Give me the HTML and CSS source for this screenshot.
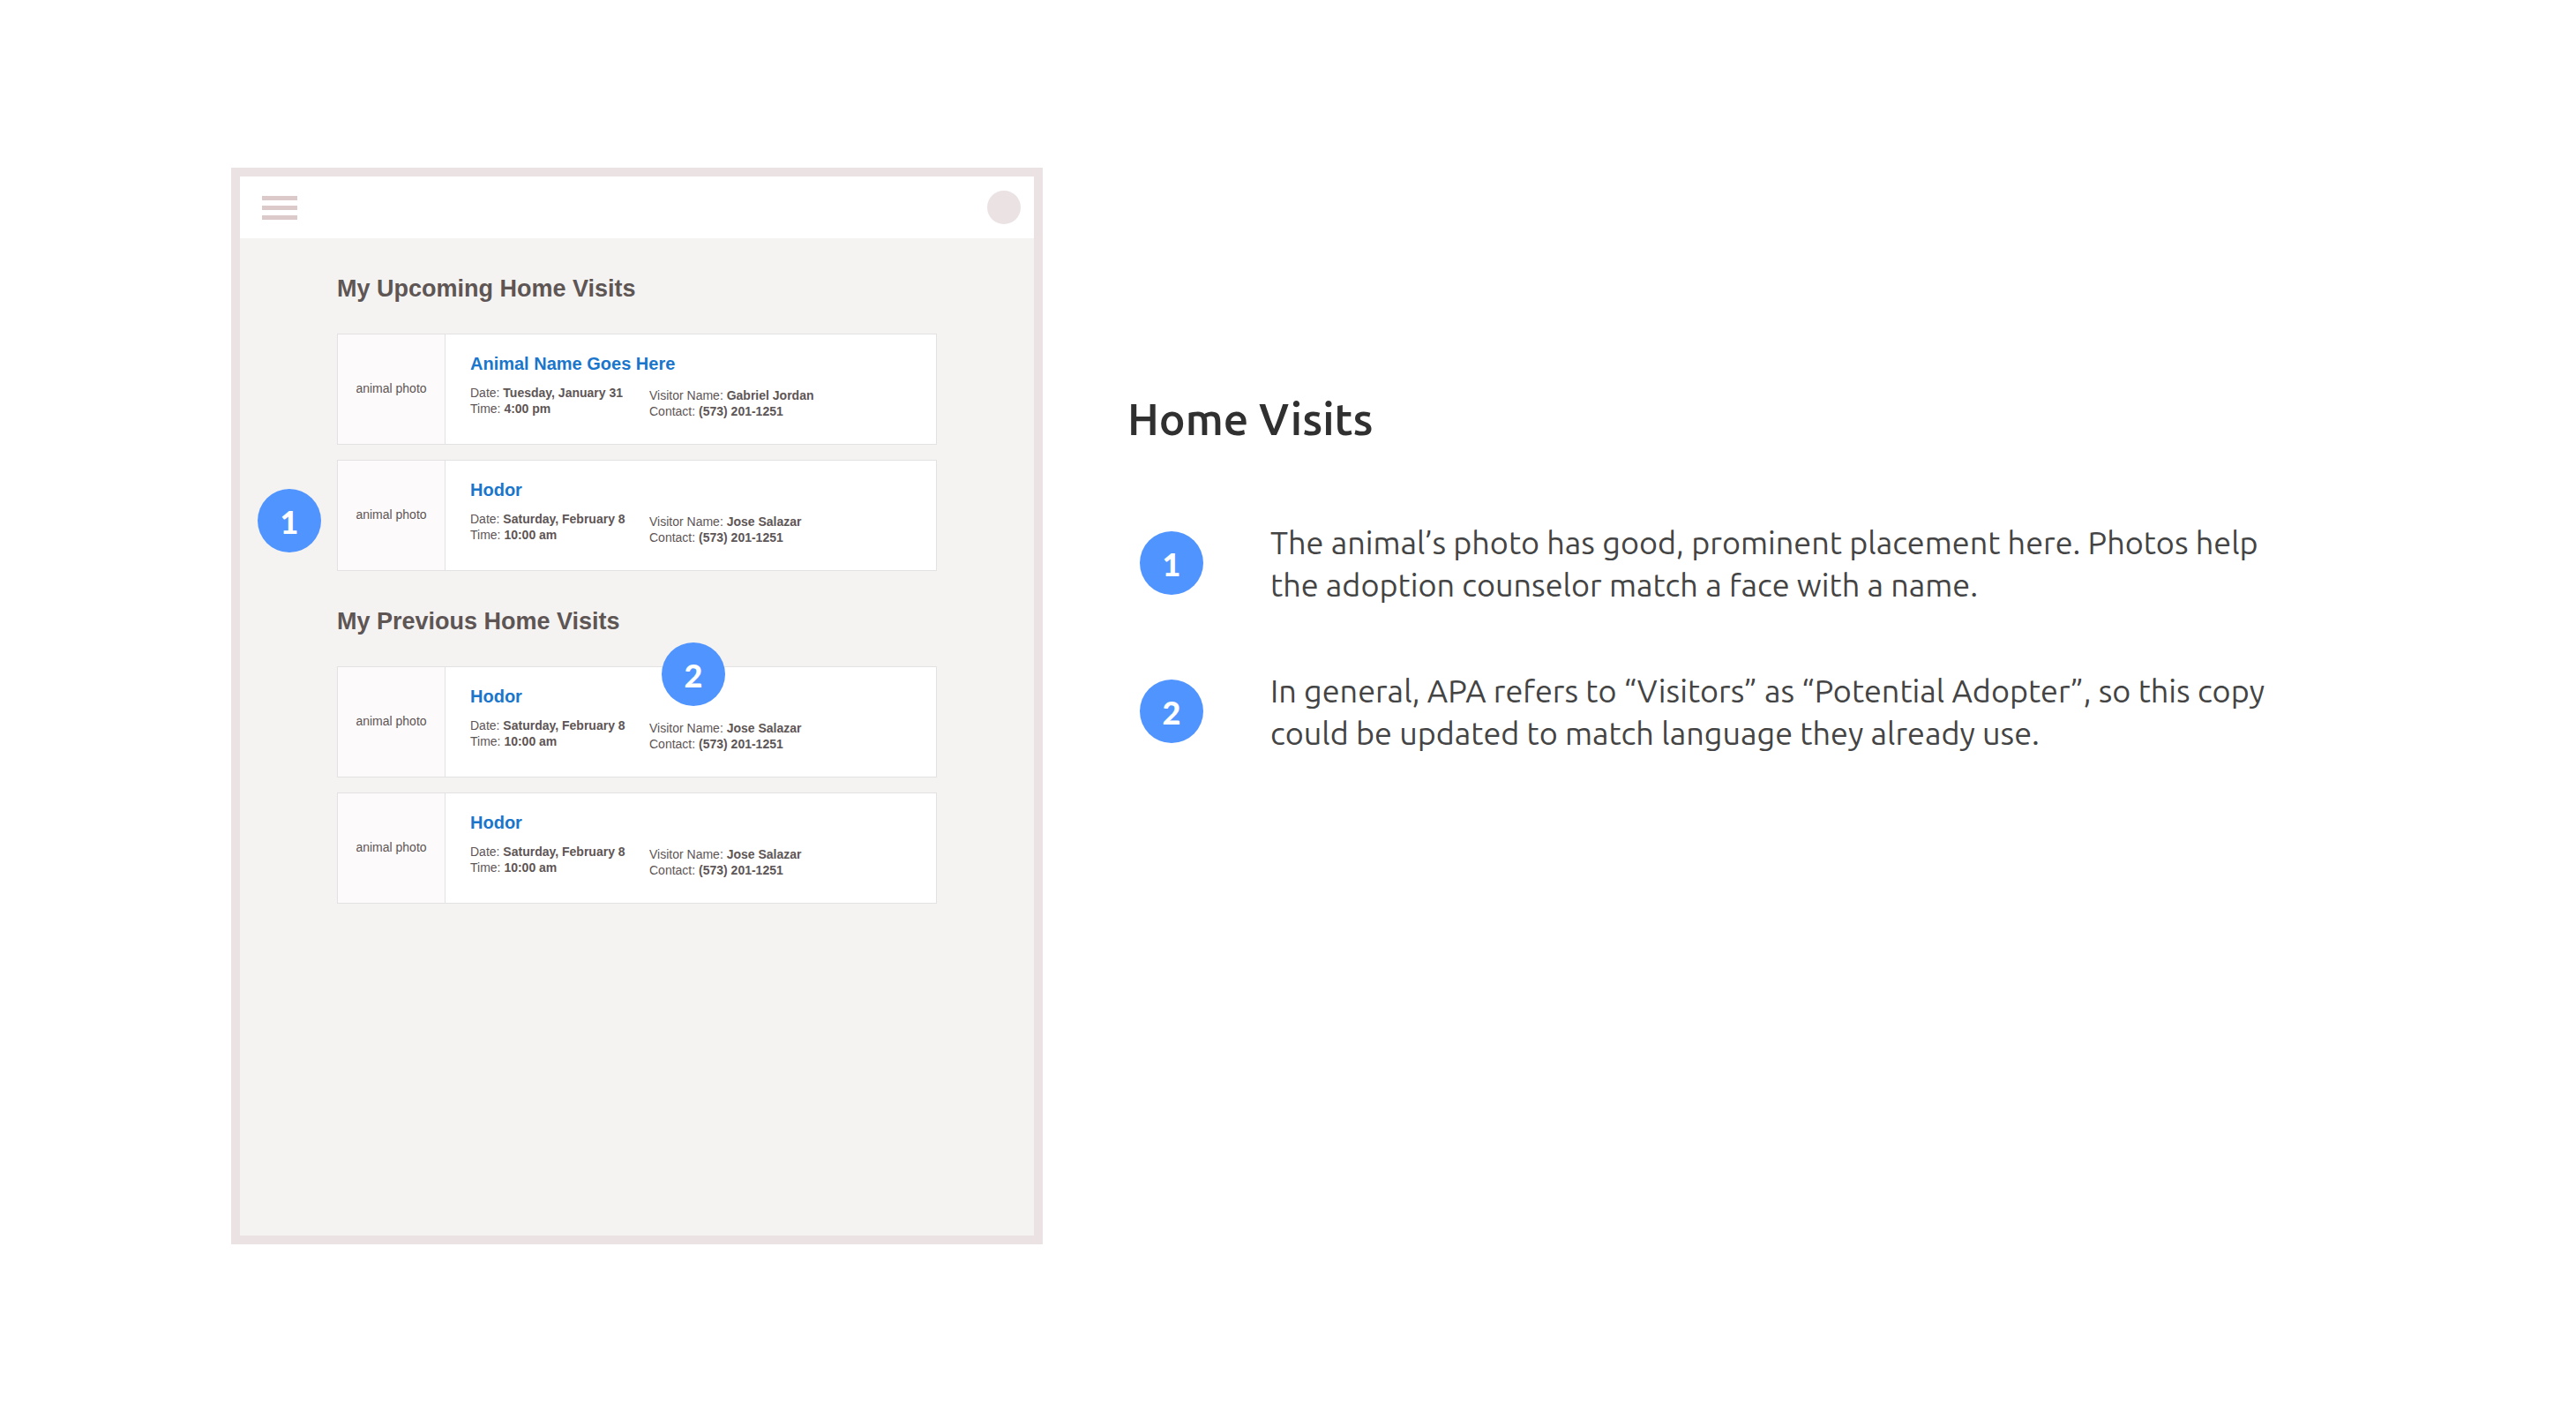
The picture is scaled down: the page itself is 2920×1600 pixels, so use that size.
FILE: index.html
```html
<!DOCTYPE html>
<html lang="en">
<head>
<meta charset="utf-8">
<meta name="viewport" content="width=device-width, initial-scale=1">
<title>Home Visits</title>
<link rel="stylesheet" href="styles.css">
</head>
<body>
<div class="page">
  <section class="wireframe" aria-label="Home visits screen">
    <header class="topbar">
      <button class="menu" type="button" aria-label="Menu"><span class="bar"></span><span class="bar"></span><span class="bar"></span></button>
      <span class="avatar"></span>
    </header>
    <div class="screen">
      <section class="group">
        <h2 class="group-title">My Upcoming Home Visits</h2>
        <div class="cards">
          <article class="card">
            <div class="photo">animal photo</div>
            <div class="details">
              <h3 class="name"><a href="#">Animal Name Goes Here</a></h3>
              <p class="when">Date: <strong>Tuesday, January 31</strong><br>Time: <strong>4:00 pm</strong></p>
              <p class="who">Visitor Name: <strong>Gabriel Jordan</strong><br>Contact: <strong>(573) 201-1251</strong></p>
            </div>
          </article>
          <article class="card">
            <div class="photo">animal photo</div>
            <div class="details">
              <h3 class="name"><a href="#">Hodor</a></h3>
              <p class="when">Date: <strong>Saturday, February 8</strong><br>Time: <strong>10:00 am</strong></p>
              <p class="who">Visitor Name: <strong>Jose Salazar</strong><br>Contact: <strong>(573) 201-1251</strong></p>
            </div>
            <span class="marker pin-side">1</span>
          </article>
        </div>
      </section>
      <section class="group">
        <h2 class="group-title">My Previous Home Visits</h2>
        <div class="cards">
          <article class="card">
            <div class="photo">animal photo</div>
            <div class="details">
              <h3 class="name"><a href="#">Hodor</a></h3>
              <p class="when">Date: <strong>Saturday, February 8</strong><br>Time: <strong>10:00 am</strong></p>
              <p class="who">Visitor Name: <strong>Jose Salazar</strong><br>Contact: <strong>(573) 201-1251</strong></p>
            </div>
            <span class="marker pin-top">2</span>
          </article>
          <article class="card">
            <div class="photo">animal photo</div>
            <div class="details">
              <h3 class="name"><a href="#">Hodor</a></h3>
              <p class="when">Date: <strong>Saturday, February 8</strong><br>Time: <strong>10:00 am</strong></p>
              <p class="who">Visitor Name: <strong>Jose Salazar</strong><br>Contact: <strong>(573) 201-1251</strong></p>
            </div>
          </article>
        </div>
      </section>
    </div>
  </section>
  <section class="notes">
    <h1 class="notes-title">Home Visits</h1>
    <div class="note">
      <span class="marker">1</span>
      <p class="note-text">The animal’s photo has good, prominent placement here. Photos help the adoption counselor match a face with a name.</p>
    </div>
    <div class="note">
      <span class="marker">2</span>
      <p class="note-text">In general, APA refers to “Visitors” as “Potential Adopter”, so this copy could be updated to match language they already use.</p>
    </div>
  </section>
</div>
</body>
</html>
```
FILE: styles.css
```css
* {
  box-sizing: border-box;
}

body,
h1,
h2,
h3,
p {
  margin: 0;
}

body {
  background: #fff;
}

.page {
  display: grid;
  grid-template-columns: minmax(0, 920fr) minmax(0, 1342fr);
  column-gap: 96px;
  padding: 190px 300px 190px 262px;
}

.wireframe {
  display: flex;
  flex-direction: column;
  min-height: calc(100vh - 380px);
  border: 10px solid #ebe2e3;
  background: #f4f3f1;
  color: #5e5555;
  font-family: "Helvetica Neue", Helvetica, "Liberation Sans", Arial, sans-serif;
}

.topbar {
  display: flex;
  align-items: center;
  justify-content: space-between;
  height: 70px;
  padding: 0 15px 0 25px;
  background: #fff;
}

.menu {
  display: flex;
  flex-direction: column;
  gap: 6px;
  padding: 0;
  border: 0;
  background: none;
}

.bar {
  width: 40px;
  height: 5px;
  background: #dccaca;
}

.avatar {
  width: 38px;
  height: 38px;
  border-radius: 50%;
  background: #ebe2e3;
}

.screen {
  display: flex;
  flex-direction: column;
  gap: 39px;
  padding: 39px 110px;
}

.group {
  display: flex;
  flex-direction: column;
  gap: 33px;
}

.group-title {
  font-size: 27px;
  line-height: 36px;
}

.cards {
  display: flex;
  flex-direction: column;
  gap: 17px;
}

.card {
  position: relative;
  display: grid;
  grid-template-columns: 122px 1fr;
  min-height: 126px;
  border: 1px solid #e2e2e3;
  background: #fff;
}

.photo {
  display: flex;
  align-items: center;
  justify-content: center;
  padding-bottom: 2px;
  border-right: 1px solid #e2e2e3;
  background: #fcfafb;
  font-size: 14px;
  line-height: 18px;
}

.details {
  display: grid;
  grid-template-columns: 203px 1fr;
  align-content: start;
  row-gap: 12px;
  padding: 21px 28px;
  font-size: 14px;
  line-height: 18px;
}

.name {
  grid-column: 1 / -1;
  font-size: 20px;
  line-height: 24px;
}

.name a {
  color: #1a76cb;
  text-decoration: none;
}

.who {
  padding-top: 3px;
}

.marker {
  display: flex;
  flex: none;
  align-items: center;
  justify-content: center;
  width: 72px;
  height: 72px;
  padding-top: 2px;
  border-radius: 50%;
  background: #5094ff;
  color: #fff;
  font-family: Lato, sans-serif;
  font-size: 36px;
  font-weight: 900;
  line-height: 40px;
}

.pin-side {
  position: absolute;
  top: 32px;
  left: -91px;
}

.pin-top {
  position: absolute;
  top: -28px;
  left: 367px;
}

.notes {
  display: flex;
  flex-direction: column;
  gap: 72px;
  padding-top: 254px;
}

.notes-title,
.note-text {
  font-family: "Ubuntu Sans", Ubuntu, "Noto Sans", sans-serif;
}

.notes-title {
  margin-bottom: 12px;
  color: #303030;
  font-size: 50px;
  font-weight: 600;
  line-height: 64px;
}

.note {
  display: flex;
  align-items: flex-start;
  gap: 76px;
  padding-left: 14px;
}

.note .marker {
  margin-top: 10px;
}

.note-text {
  color: #444;
  font-size: 36px;
  line-height: 48px;
}
```
